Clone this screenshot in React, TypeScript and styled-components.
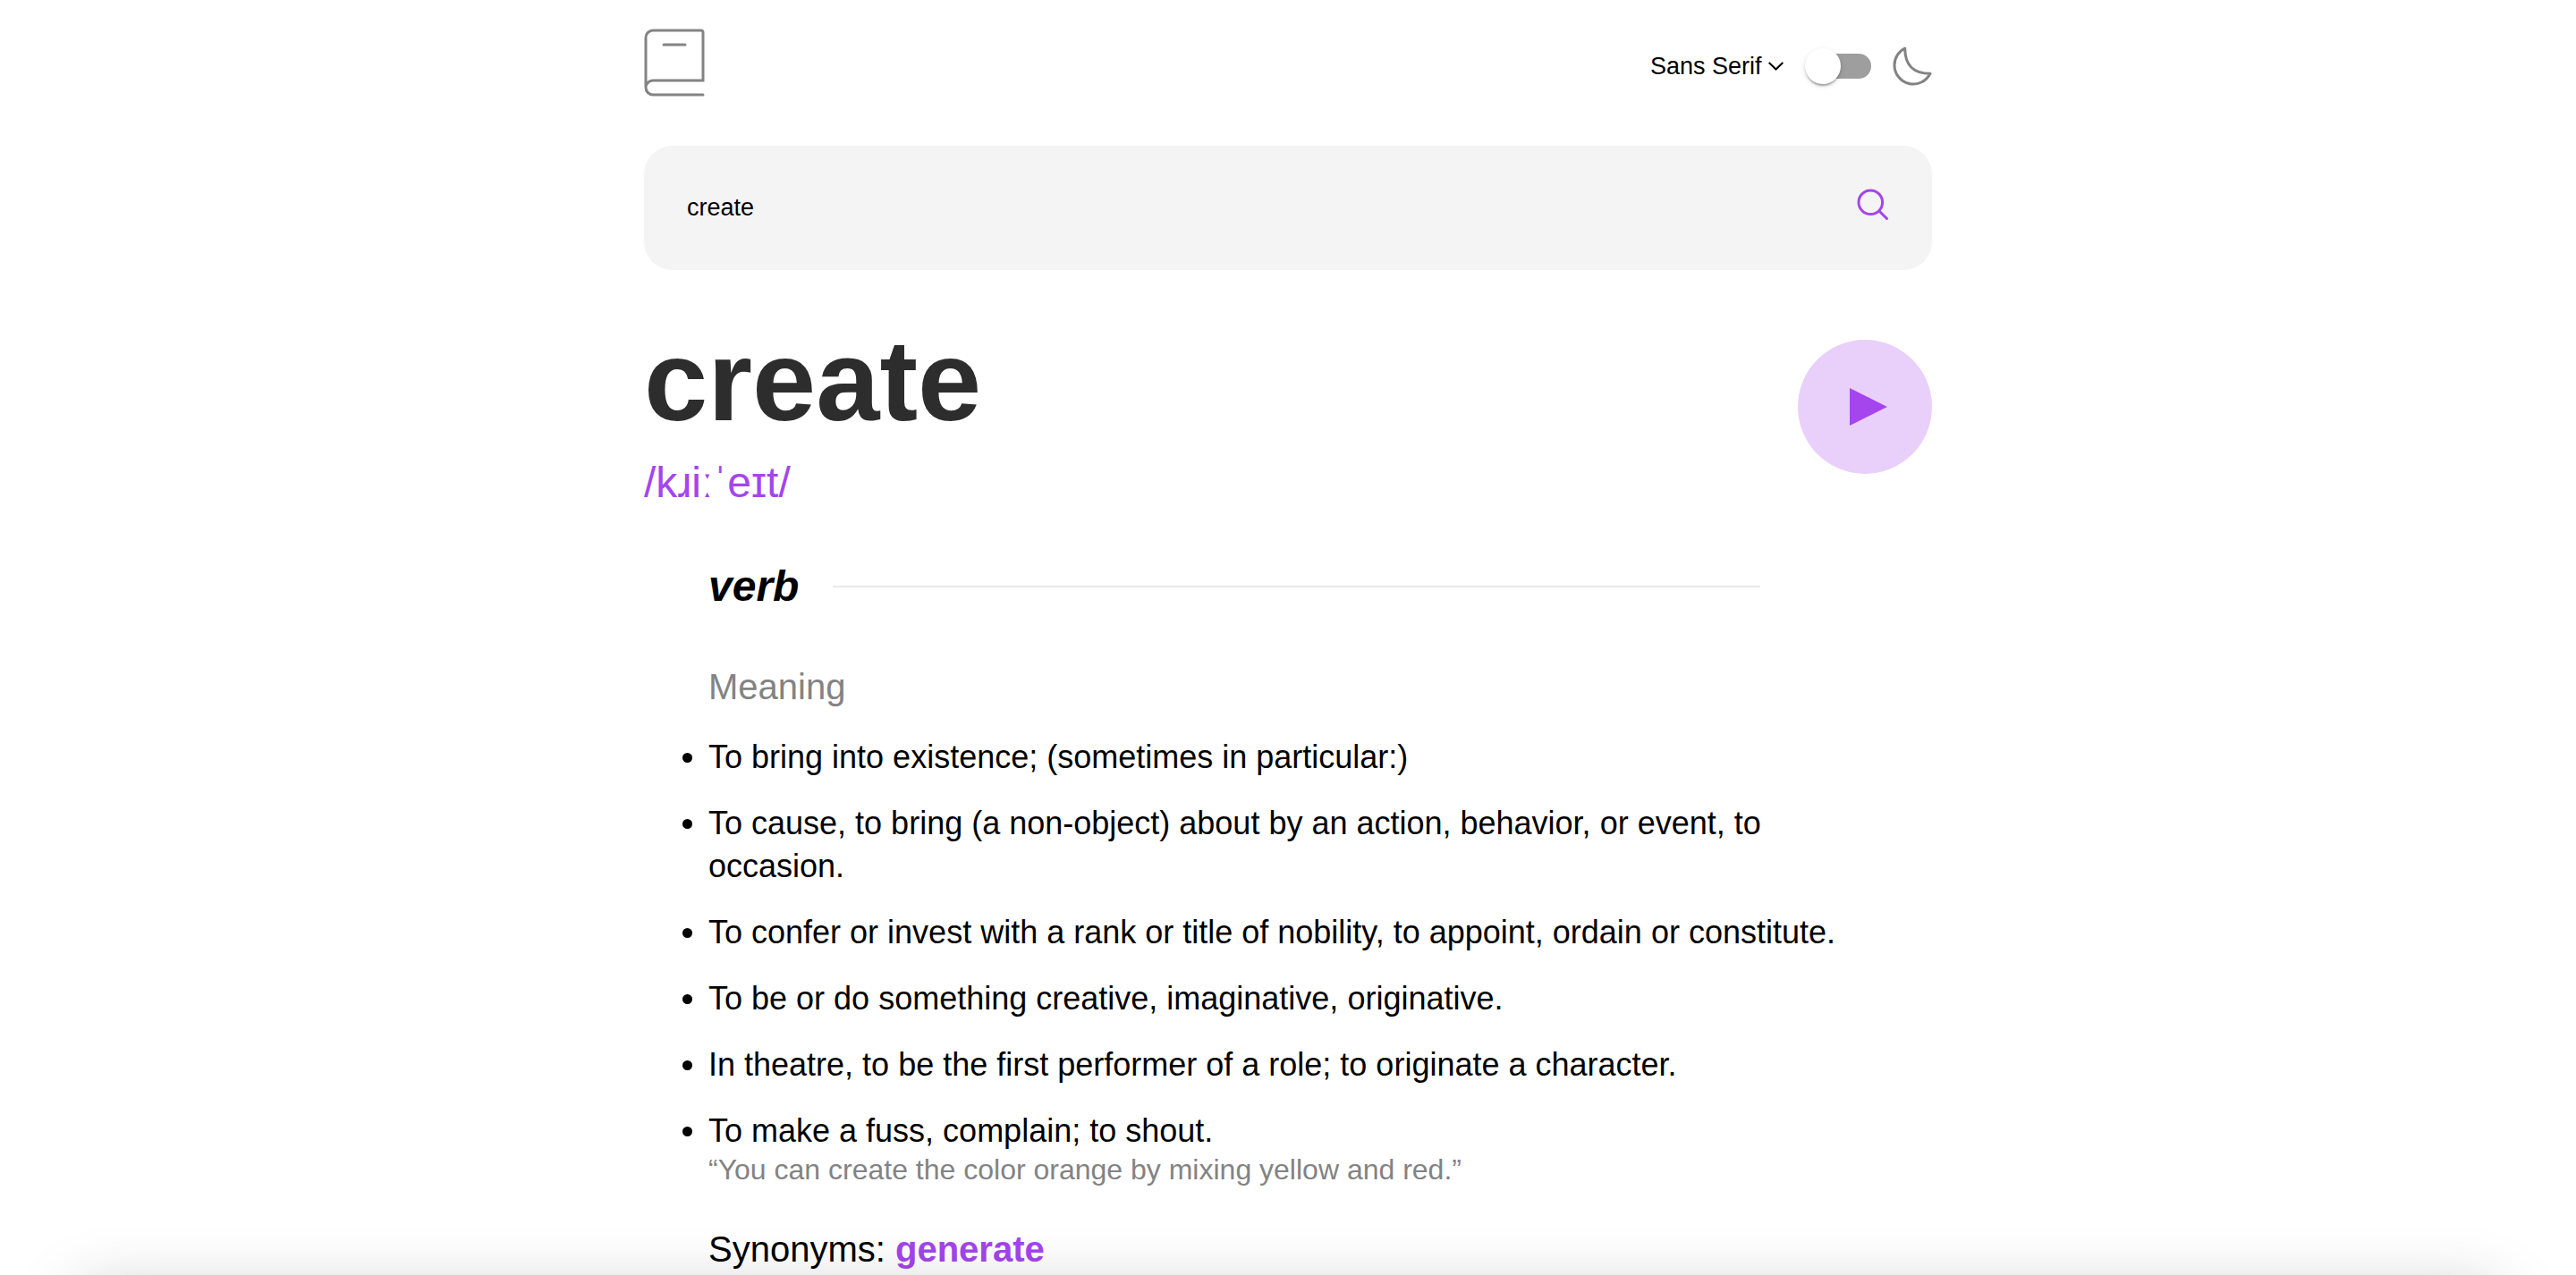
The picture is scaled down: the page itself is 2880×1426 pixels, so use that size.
import React, { useState } from "react";
import styled, { createGlobalStyle } from "styled-components";

const colors = {
  ink: "#2d2d2d",
  grey: "#838383",
  rule: "#e9e9e9",
  field: "#f4f4f4",
  purple: "#a445ed",
  lilac: "#e9d0fa",
  track: "#9e9e9e",
};

const GlobalStyle = createGlobalStyle`
  *, *::before, *::after { box-sizing: border-box; }
  body {
    margin: 0;
    background: #fff;
    color: #000;
    font-family: Helvetica, Arial, "Liberation Sans", sans-serif;
  }
  h1, h2, h3, p, ul { margin: 0; padding: 0; }
  button, input, select { font: inherit; color: inherit; }
`;

const Page = styled.main`
  width: 50%;
  margin: 0 auto;
  padding-top: 32px;
`;

const Header = styled.header`
  display: flex;
  align-items: center;
  justify-content: space-between;
  min-height: 84px;
  margin-bottom: 47px;
`;

const LogoLink = styled.a`
  display: block;
  align-self: flex-start;
  line-height: 0;
`;

const Controls = styled.div`
  display: flex;
  align-items: center;
  gap: 24px;
`;

const FontPicker = styled.label`
  display: grid;
  grid-template-areas: "field";
  align-items: center;

  svg {
    grid-area: field;
    justify-self: end;
    pointer-events: none;
  }
`;

const FontSelect = styled.select`
  grid-area: field;
  appearance: none;
  border: 0;
  padding: 0 24px 0 0;
  background: transparent;
  font-size: 27px;
  line-height: 32px;
  cursor: pointer;
`;

const ThemeSwitch = styled.label`
  display: flex;
  align-items: center;
  gap: 24px;
`;

const SwitchInput = styled.input`
  appearance: none;
  display: grid;
  grid-template-areas: "switch";
  align-items: center;
  width: 74px;
  height: 40px;
  margin: 0;
  cursor: pointer;

  &::before {
    content: "";
    grid-area: switch;
    justify-self: end;
    width: 68px;
    height: 28px;
    border-radius: 14px;
    background: ${colors.track};
  }

  &::after {
    content: "";
    grid-area: switch;
    justify-self: start;
    width: 40px;
    height: 40px;
    border-radius: 50%;
    background: #fff;
    box-shadow:
      0 4px 2px -2px rgba(0, 0, 0, 0.2),
      0 2px 2px rgba(0, 0, 0, 0.14),
      0 2px 6px rgba(0, 0, 0, 0.12);
  }

  &:checked::before { background: ${colors.purple}; }
  &:checked::after { justify-self: end; }
`;

const SearchForm = styled.form`
  display: flex;
  align-items: center;
  height: 139px;
  padding: 0 48px 2px;
  border-radius: 32px;
  background: ${colors.field};
`;

const SearchInput = styled.input`
  flex: 1;
  min-width: 0;
  padding: 0;
  border: 0;
  outline: 0;
  background: transparent;
  font-size: 27px;
  line-height: 32px;
`;

const SearchButton = styled.button`
  display: flex;
  align-items: flex-start;
  height: 42px;
  padding: 0;
  border: 0;
  background: transparent;
  cursor: pointer;
`;

const WordRow = styled.section`
  display: flex;
  align-items: flex-start;
  justify-content: space-between;
  padding-top: 60px;
`;

const Word = styled.h1`
  color: ${colors.ink};
  font-size: 128px;
  line-height: 128px;
`;

const Phonetic = styled.p`
  margin-top: 22px;
  color: ${colors.purple};
  font-size: 48px;
  line-height: 56px;
`;

const PlayButton = styled.button`
  display: grid;
  place-items: center;
  width: 150px;
  height: 150px;
  margin-top: 18px;
  padding: 0 0 0 8px;
  border: 0;
  border-radius: 50%;
  background: ${colors.lilac};
  cursor: pointer;
`;

const Entry = styled.section`
  padding: 60px 72px 0;
`;

const PartOfSpeech = styled.div`
  display: flex;
  align-items: center;
  gap: 38px;
  padding-right: 120px;
`;

const PartName = styled.h2`
  font-size: 48px;
  font-style: italic;
  line-height: 56px;
`;

const Rule = styled.hr`
  flex: 1;
  height: 2px;
  margin: 0;
  border: 0;
  background: ${colors.rule};
`;

const MeaningTitle = styled.h3`
  margin-top: 60px;
  color: ${colors.grey};
  font-size: 40px;
  font-weight: 400;
  line-height: 48px;
`;

const MeaningList = styled.ul`
  display: flex;
  flex-direction: column;
  gap: 26px;
  margin-top: 31px;
`;

const Meaning = styled.li`
  font-size: 36px;
  line-height: 48px;
`;

const Example = styled.p`
  color: ${colors.grey};
  font-size: 32px;
  line-height: 38px;
`;

const Synonyms = styled.p`
  margin-top: 46px;
  font-size: 40px;
  line-height: 48px;
`;

const SynonymLink = styled.a`
  color: ${colors.purple};
  font-weight: 700;
  text-decoration: none;
`;

const BottomShade = styled.div`
  position: fixed;
  top: calc(100% + 18px);
  left: 88px;
  right: 88px;
  height: 200px;
  box-shadow: 0 0 72px rgba(0, 0, 0, 0.22);
  pointer-events: none;
`;

const BookIcon = () => (
  <svg width="68" height="76" viewBox="0 0 68 76" fill="none" stroke={colors.grey} strokeWidth="3" strokeLinecap="round" aria-hidden="true">
    <path d="M2 66V10a8 8 0 0 1 8-8h53.500a2.500 2.500 0 0 1 2.500 2.500V58H10a8 8 0 0 0 0 16h56" />
    <path d="M22 18h24" />
  </svg>
);

const ChevronIcon = () => (
  <svg width="17" height="10" viewBox="0 0 17 10" fill="none" stroke="#000" strokeWidth="2" aria-hidden="true">
    <path d="M.7 1l7.800 7.500L16.300 1" />
  </svg>
);

const MoonIcon = () => (
  <svg width="44" height="44" viewBox="0 0 22 22" fill="none" stroke={colors.grey} strokeWidth="1.5" strokeLinecap="round" strokeLinejoin="round" aria-hidden="true">
    <path d="M1 10.449a10.544 10.544 0 0 0 19.993 4.686C11.544 15.135 6.858 10.448 6.858 1A10.545 10.545 0 0 0 1 10.449Z" />
  </svg>
);

const SearchIcon = () => (
  <svg width="36" height="36" viewBox="0 0 36 36" fill="none" stroke={colors.purple} strokeWidth="3" strokeLinecap="round" aria-hidden="true">
    <circle cx="15.300" cy="15.300" r="13.300" />
    <path d="M25 25l8.500 8.500" />
  </svg>
);

const PlayIcon = () => (
  <svg width="42" height="42" viewBox="0 0 42 42" fill={colors.purple} aria-hidden="true">
    <path d="M0 0l42 21L0 42z" />
  </svg>
);

const meanings: { text: string; example?: string }[] = [
  { text: "To bring into existence; (sometimes in particular:)" },
  { text: "To cause, to bring (a non-object) about by an action, behavior, or event, to occasion." },
  { text: "To confer or invest with a rank or title of nobility, to appoint, ordain or constitute." },
  { text: "To be or do something creative, imaginative, originative." },
  { text: "In theatre, to be the first performer of a role; to originate a character." },
  {
    text: "To make a fuss, complain; to shout.",
    example: "“You can create the color orange by mixing yellow and red.”",
  },
];

export default function App() {
  const [query, setQuery] = useState("create");
  const [dark, setDark] = useState(false);

  return (
    <>
      <GlobalStyle />
      <Page>
        <Header>
          <LogoLink href="#" aria-label="Dictionary home">
            <BookIcon />
          </LogoLink>
          <Controls>
            <FontPicker>
              <FontSelect aria-label="Font" defaultValue="sans">
                <option value="sans">Sans Serif</option>
              </FontSelect>
              <ChevronIcon />
            </FontPicker>
            <ThemeSwitch>
              <SwitchInput
                type="checkbox"
                aria-label="Dark theme"
                checked={dark}
                onChange={(e) => setDark(e.target.checked)}
              />
              <MoonIcon />
            </ThemeSwitch>
          </Controls>
        </Header>

        <SearchForm role="search" onSubmit={(e) => e.preventDefault()}>
          <SearchInput
            type="text"
            aria-label="Search for a word"
            value={query}
            onChange={(e) => setQuery(e.target.value)}
          />
          <SearchButton type="submit" aria-label="Search">
            <SearchIcon />
          </SearchButton>
        </SearchForm>

        <WordRow>
          <div>
            <Word>create</Word>
            <Phonetic>/kɹiːˈeɪt/</Phonetic>
          </div>
          <PlayButton type="button" aria-label="Play pronunciation">
            <PlayIcon />
          </PlayButton>
        </WordRow>

        <Entry>
          <PartOfSpeech>
            <PartName>verb</PartName>
            <Rule />
          </PartOfSpeech>
          <MeaningTitle>Meaning</MeaningTitle>
          <MeaningList>
            {meanings.map((m) => (
              <Meaning key={m.text}>
                {m.text}
                {m.example && <Example>{m.example}</Example>}
              </Meaning>
            ))}
          </MeaningList>
          <Synonyms>
            Synonyms: <SynonymLink href="#generate">generate</SynonymLink>
          </Synonyms>
        </Entry>
      </Page>
      <BottomShade />
    </>
  );
}
